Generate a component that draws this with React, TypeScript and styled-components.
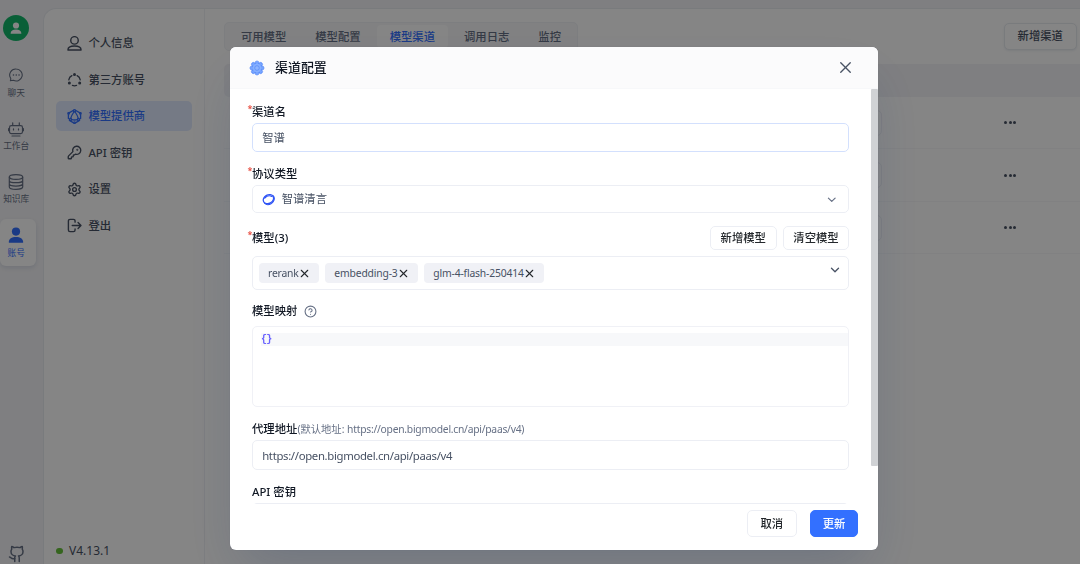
import React from "react";
import styled, { createGlobalStyle } from "styled-components";
import { Github, KeyRound, Settings, X, ChevronDown, CircleHelp } from "lucide-react";

const GlobalStyle = createGlobalStyle`
  * { box-sizing: border-box; }
  body {
    margin: 0;
    overflow: hidden;
    font-family: "Noto Sans", "Noto Sans CJK SC", sans-serif;
    font-size: 11.35px;
    line-height: 16px;
    color: #111824;
  }
  button, input { font: inherit; }
`;

const Page = styled.div`
  display: flex;
  height: 564px;
  width: 1080px;
  background: #f4f4f7;
`;

const Rail = styled.nav`
  width: 42.5px;
  flex: none;
  display: flex;
  flex-direction: column;
  padding: 15.3px 0 0;
`;

const Avatar = styled.div`
  width: 26px;
  height: 26px;
  margin-left: 3.4px;
  border-radius: 50%;
  background: #12b76a;
  color: #fff;
  display: flex;
  align-items: center;
  justify-content: center;
`;

const RailList = styled.div`
  display: flex;
  flex-direction: column;
  gap: 6.4px;
  margin-top: 17.9px;
`;

const RailItem = styled.div<{ $active?: boolean }>`
  width: 36.4px;
  height: 47px;
  padding: 8px 4px 0 0;
  display: flex;
  flex-direction: column;
  align-items: center;
  gap: 1.4px;
  font-size: 8.7px;
  white-space: nowrap;
  border-radius: 6px;
  color: ${(p) => (p.$active ? "#3370ff" : "#667085")};
  background: ${(p) => (p.$active ? "#fff" : "transparent")};
  box-shadow: ${(p) => (p.$active ? "0 2px 5px rgba(19,51,107,.12)" : "none")};
`;

const RailFoot = styled.div`
  margin: auto 0 0 7.8px;
  height: 18.6px;
  color: #667085;
`;

const Shell = styled.div`
  flex: 1;
  margin-top: 7.5px;
  display: flex;
  background: #fff;
  border: 1px solid #e8ebf0;
  border-right: 0;
  border-bottom: 0;
  border-radius: 13px 0 0 0;
`;

const Side = styled.aside`
  width: 161.3px;
  flex: none;
  display: flex;
  flex-direction: column;
  padding: 19.6px 12.3px 5.2px 12.5px;
  border-right: 1px solid #f0f1f6;
`;

const SideList = styled.div`
  display: flex;
  flex-direction: column;
  gap: 6.5px;
`;

const SideItem = styled.div<{ $active?: boolean }>`
  height: 30px;
  display: flex;
  align-items: center;
  gap: 6.8px;
  padding-left: 10.6px;
  border-radius: 5px;
  font-weight: 500;
  color: ${(p) => (p.$active ? "#3370ff" : "#485264")};
  background: ${(p) => (p.$active ? "#e1eaff" : "transparent")};
`;

const Version = styled.div`
  margin-top: auto;
  display: flex;
  align-items: center;
  gap: 6.5px;
  font-size: 12px;
  color: #485264;
  &::before {
    content: "";
    width: 6.5px;
    height: 6.5px;
    border-radius: 50%;
    background: #67c13b;
  }
`;

const Main = styled.main`
  flex: 1;
  padding: 13px 0 0 19.5px;
`;

const Bar = styled.div`
  display: flex;
  justify-content: space-between;
  align-items: center;
  padding-right: 3.5px;
`;

const Tabs = styled.div`
  display: flex;
  gap: 3.7px;
  height: 29px;
  padding: 2px 3px;
  border-radius: 5px;
  border: 1px solid #f0f1f6;
  background: #f7f8fa;
`;

const Tab = styled.div<{ $active?: boolean }>`
  display: flex;
  align-items: center;
  padding: 1px 12.65px 0;
  border-radius: 4px;
  font-weight: 500;
  color: ${(p) => (p.$active ? "#3370ff" : "#667085")};
  background: ${(p) => (p.$active ? "#fff" : "transparent")};
`;

const Button = styled.button<{ $w: number; $h?: number; $primary?: boolean }>`
  width: ${(p) => p.$w}px;
  height: ${(p) => p.$h ?? 27}px;
  padding: 0;
  border-radius: 5px;
  font-weight: 500;
  white-space: nowrap;
  border: 1px solid ${(p) => (p.$primary ? "#3370ff" : "#eceef4")};
  background: ${(p) => (p.$primary ? "#3370ff" : "#fff")};
  color: ${(p) => (p.$primary ? "#fff" : "#24282c")};
`;

const ToolbarButton = styled(Button)`
  border-color: #e8ebf0;
  color: #485264;
  box-shadow: 0 1px 2px rgba(19, 51, 107, 0.08);
`;

const Table = styled.div`
  margin-top: 13px;
`;

const TableHead = styled.div`
  height: 33.4px;
  border-radius: 5px 0 0 5px;
  background: #f4f4f7;
`;

const TableRow = styled.div`
  height: 52.5px;
  display: flex;
  align-items: center;
  border-bottom: 1px solid #f7f8fa;
`;

const Priority = styled.div`
  width: 60px;
  height: 26px;
  margin-left: 598px;
  border: 1px solid #f0f1f6;
  border-radius: 5px;
`;

const Dots = styled.div`
  display: flex;
  gap: 1.6px;
  margin: 0.6px 0 0 122px;
  i {
    width: 3px;
    height: 3px;
    border-radius: 50%;
    background: #485264;
  }
`;

const Overlay = styled.div`
  position: fixed;
  inset: 0;
  display: flex;
  align-items: flex-start;
  padding: 46.5px 0 0 229.5px;
  background: rgba(0, 0, 0, 0.48);
`;

const Modal = styled.section`
  width: 648.3px;
  height: 503.3px;
  display: flex;
  flex-direction: column;
  overflow: hidden;
  border-radius: 6px;
  background: #fff;
  box-shadow: 0 26px 52px -10px rgba(19, 51, 107, 0.2), 0 0 1px rgba(19, 51, 107, 0.2);
`;

const ModalHead = styled.header`
  height: 42.8px;
  flex: none;
  display: flex;
  align-items: center;
  padding: 0.8px 23.3px 0 19.5px;
  background: #fbfbfc;
  border-bottom: 1px solid #f7f8fa;
`;

const Title = styled.h1`
  flex: 1;
  margin: -1px 0 0 10px;
  font-size: 12.95px;
  font-weight: 500;
  line-height: 20px;
`;

const ScrollArea = styled.div`
  flex: 1;
  min-height: 0;
  display: flex;
  justify-content: space-between;
`;

const Thumb = styled.div`
  width: 7px;
  height: 377px;
  border-radius: 1px;
  background: #d0d2d5;
`;

const FormClip = styled.div`
  width: 603px;
  margin-left: 16.5px;
  padding-left: 6px;
  overflow: hidden;
`;

const Label = styled.div<{ $top: number; $h?: number }>`
  margin-top: ${(p) => p.$top}px;
  height: ${(p) => p.$h ?? 16}px;
  display: flex;
  align-items: center;
  font-weight: 500;
`;

const Star = styled.span`
  width: 4.5px;
  height: 18px;
  margin-left: -4.5px;
  color: #e5392c;
  font-size: 9px;
  line-height: 12px;
`;

const Hint = styled.span`
  font-size: 10.3px;
  font-weight: 400;
  color: #667085;
`;

const Url = styled.span<{ $tight: number }>`
  letter-spacing: -${(p) => p.$tight}px;
`;

const HelpMark = styled.span`
  display: flex;
  margin-left: 7px;
  color: #667085;
`;

const Actions = styled.div`
  display: flex;
  gap: 6.5px;
  margin-left: auto;
`;

const Field = styled.div<{ $top: number; $h: number; $focus?: boolean }>`
  margin-top: ${(p) => p.$top}px;
  height: ${(p) => p.$h}px;
  display: flex;
  align-items: center;
  padding: 0 10px 0 9.2px;
  border: 1px solid ${(p) => (p.$focus ? "#d3e0fd" : "#eceef4")};
  border-radius: 5px;
  color: #485264;
`;

const UrlField = styled(Field)`
  padding-top: 1.6px;
`;

const SelectText = styled.span`
  flex: 1;
  margin-left: 6.5px;
`;

const TagField = styled(Field)`
  gap: 6.5px;
  padding: 0 6px;
`;

const Tag = styled.span`
  height: 19.5px;
  display: flex;
  align-items: center;
  gap: 0;
  padding: 0.5px 7.2px 0 9px;
  border-radius: 4px;
  background: #f0f1f6;
  color: #485264;
  font-size: 10.35px;
  letter-spacing: -0.17px;
  svg { color: #24282c; margin-left: -0.5px; margin-right: 0.5px; }
`;

const TagArrow = styled.span`
  display: flex;
  margin: 0 0 6px auto;
  color: #485264;
`;

const Editor = styled.div`
  height: 81.5px;
  margin-top: 6.4px;
  padding: 6px 0 0 8px;
  border: 1px solid #f0f1f6;
  border-radius: 5px;
`;

const CodeLine = styled.div`
  height: 13px;
  line-height: 14px;
  background: #f7f8fa;
  color: #6a63ff;
  font-family: "Liberation Mono", monospace;
  font-size: 10px;
  font-weight: 700;
  letter-spacing: -0.8px;
`;

const Foot = styled.footer`
  height: 46px;
  flex: none;
  display: flex;
  justify-content: flex-end;
  gap: 13px;
  padding: 6.3px 19.5px 0 0;
`;

function UserSolid({ size }: { size: number }) {
  return (
    <svg width={size} height={size} viewBox="0 0 16 16" fill="currentColor">
      <circle cx="8" cy="4.6" r="4.1" />
      <path d="M.8 15.2c0-3.4 3-5.2 7.2-5.2s7.2 1.8 7.2 5.2c0 .4-.2.6-.6.6H1.4c-.4 0-.6-.2-.6-.6Z" />
    </svg>
  );
}

function Stroke({ size, children, w = 1.3 }: { size: number; children: React.ReactNode; w?: number }) {
  return (
    <svg width={size} height={size} viewBox="0 0 16 16" fill="none" stroke="currentColor" strokeWidth={w} strokeLinecap="round" strokeLinejoin="round">
      {children}
    </svg>
  );
}

const ChatIcon = () => (
  <Stroke size={16} w={1.1}>
    <path d="M8.2 2a6 6 0 1 1-2.8 11.3c-.9.2-1.9.4-3 .4.3-.8.4-1.6.3-2.4A6 6 0 0 1 8.2 2Z" />
    <path d="M5.4 8h.1M8.2 8h.1M11 8h.1" strokeWidth="1.5" />
  </Stroke>
);

const RobotIcon = () => (
  <Stroke size={16} w={1.2}>
    <rect x="1.5" y="4.6" width="13" height="8" rx="1.8" />
    <path d="M4.7 4.2V1.8M11.3 4.2V1.8M5.5 7.9v1M10.5 7.9v1M4 15h8M.6 7.7v2M15.4 7.7v2" />
  </Stroke>
);

const DatabaseIcon = () => (
  <Stroke size={16} w={1.2}>
    <ellipse cx="8" cy="3" rx="6.7" ry="2.4" />
    <path d="M1.3 3v10c0 1.3 3 2.4 6.7 2.4s6.7-1.1 6.7-2.4V3M1.3 6.4c0 1.3 3 2.3 6.7 2.3s6.7-1 6.7-2.3M1.3 9.8c0 1.3 3 2.3 6.7 2.3s6.7-1 6.7-2.3" />
  </Stroke>
);

const PersonIcon = () => (
  <Stroke size={15} w={1.5}>
    <circle cx="8" cy="4.7" r="4" />
    <path d="M1 14.9c0-2.6 2.9-4.2 7-4.2s7 1.6 7 4.2Z" />
  </Stroke>
);

const CircleNodesIcon = () => (
  <Stroke size={15} w={1.4}>
    <path d="M5.2 3.9a6 6 0 0 0-3.3 4.4M10.8 3.9a6 6 0 0 1 3.3 4.4M5.8 14.3a6 6 0 0 0 4.4 0" />
    <g fill="currentColor" stroke="none">
      <circle cx="8" cy="2.7" r="1.6" />
      <circle cx="2.5" cy="11.7" r="1.6" />
      <circle cx="13.5" cy="11.7" r="1.6" />
    </g>
  </Stroke>
);

const ProviderIcon = () => (
  <Stroke size={15} w={1.4}>
    <path d="M6.6 1.6 2.2 4.1M9.4 1.6l4.4 2.5M1.5 6v4M14.5 6v4M2.6 12.2l4 2.3M13.4 12.2l-4 2.3M7.3 3.2C5.6 5.7 4.4 8 4 10.1M8.7 3.2c1.7 2.5 2.9 4.8 3.3 6.9M4.9 11.3c2 .6 4.2.6 6.2 0" />
    <circle cx="8" cy="1.9" r="1.2" />
    <circle cx="1.7" cy="4.7" r=".8" />
    <circle cx="14.3" cy="4.7" r=".8" />
    <circle cx="3.7" cy="11.2" r="1.2" />
    <circle cx="12.3" cy="11.2" r="1.2" />
    <circle cx="8" cy="14.6" r=".9" />
  </Stroke>
);

const ExitIcon = () => (
  <Stroke size={15} w={1.5}>
    <path d="M8.6 4.4V3.2c0-1-.7-1.7-1.7-1.7H3.2c-1 0-1.7.7-1.7 1.7v9.6c0 1 .7 1.7 1.7 1.7h3.7c1 0 1.7-.7 1.7-1.7v-1.2M5.6 8h9.2M11.8 4.9 14.9 8l-3.1 3.1" />
  </Stroke>
);

const FlowerIcon = () => (
  <svg width="16" height="16" viewBox="0 0 16 16">
    <g fill="#76a4ff" stroke="#4d83f7" strokeWidth=".6">
      {[0, 45, 90, 135, 180, 225, 270, 315].map((a) => (
        <ellipse key={a} cx="8" cy="3.4" rx="2" ry="2.5" transform={`rotate(${a} 8 8)`} />
      ))}
      <circle cx="8" cy="8" r="4.2" stroke="none" fill="#86b0ff" />
      <circle cx="8" cy="8" r="2.3" fill="#8db4ff" />
    </g>
  </svg>
);

const ZhipuIcon = () => (
  <svg width="13" height="13" viewBox="0 0 16 16" fill="none" stroke="#2f54f5" strokeLinecap="round">
    <ellipse cx="7.9" cy="7.6" rx="6.7" ry="5.2" transform="rotate(-28 7.9 7.6)" strokeWidth="1.6" />
    <path d="M14 3.6c2.2 2.8 1 7.2-2.4 9.4-3 1.8-6.6 1.6-8.4-.4M3.4 6.4C5.6 3.8 9.4 2.8 12 4.2" strokeWidth="1.4" />
  </svg>
);

const railItems = [
  { label: "聊天", icon: <ChatIcon /> },
  { label: "工作台", icon: <RobotIcon /> },
  { label: "知识库", icon: <DatabaseIcon /> },
  { label: "账号", icon: <UserSolid size={16} />, active: true },
];

const sideItems = [
  { label: "个人信息", icon: <PersonIcon /> },
  { label: "第三方账号", icon: <CircleNodesIcon /> },
  { label: "模型提供商", icon: <ProviderIcon />, active: true },
  { label: "API 密钥", icon: <KeyRound size={15} strokeWidth={2.2} /> },
  { label: "设置", icon: <Settings size={15} strokeWidth={2.2} /> },
  { label: "登出", icon: <ExitIcon /> },
];

const tabs = ["可用模型", "模型配置", "模型渠道", "调用日志", "监控"];
const models = ["rerank", "embedding-3", "glm-4-flash-250414"];
const proxyUrl = "https://open.bigmodel.cn/api/paas/v4";

export default function App() {
  return (
    <>
      <GlobalStyle />
      <Page>
        <Rail>
          <Avatar><UserSolid size={12} /></Avatar>
          <RailList>
            {railItems.map((r) => (
              <RailItem key={r.label} $active={r.active}>{r.icon}{r.label}</RailItem>
            ))}
          </RailList>
          <RailFoot><Github size={18} strokeWidth={2} /></RailFoot>
        </Rail>
        <Shell>
          <Side>
            <SideList>
              {sideItems.map((s) => (
                <SideItem key={s.label} $active={s.active}>{s.icon}{s.label}</SideItem>
              ))}
            </SideList>
            <Version>V4.13.1</Version>
          </Side>
          <Main>
            <Bar>
              <Tabs>
                {tabs.map((t) => <Tab key={t} $active={t === "模型渠道"}>{t}</Tab>)}
              </Tabs>
              <ToolbarButton $w={72.5}>新增渠道</ToolbarButton>
            </Bar>
            <Table>
              <TableHead />
              {[0, 1, 2].map((n) => (
                <TableRow key={n}>
                  <Priority />
                  <Dots><i /><i /><i /></Dots>
                </TableRow>
              ))}
            </Table>
          </Main>
        </Shell>
      </Page>
      <Overlay>
        <Modal>
          <ModalHead>
            <FlowerIcon />
            <Title>渠道配置</Title>
            <X size={19} strokeWidth={1.7} color="#485264" />
          </ModalHead>
          <ScrollArea>
            <FormClip>
              <Label $top={14.8}><Star>*</Star>渠道名</Label>
              <Field $top={2.9} $h={29.5} $focus>智谱</Field>
              <Label $top={14}><Star>*</Star>协议类型</Label>
              <Field $top={2.8} $h={28}>
                <ZhipuIcon />
                <SelectText>智谱清言</SelectText>
                <ChevronDown size={13.5} strokeWidth={2.1} color="#667085" />
              </Field>
              <Label $top={13.1} $h={24}>
                <Star>*</Star>模型(3)
                <Actions>
                  <Button $w={66.5} $h={24}>新增模型</Button>
                  <Button $w={66} $h={24}>清空模型</Button>
                </Actions>
              </Label>
              <TagField $top={6} $h={33.2}>
                {models.map((m) => (
                  <Tag key={m}>{m}<X size={13} strokeWidth={2} /></Tag>
                ))}
                <TagArrow><ChevronDown size={14} strokeWidth={2.2} /></TagArrow>
              </TagField>
              <Label $top={13.9}>
                模型映射<HelpMark><CircleHelp size={13} strokeWidth={2} /></HelpMark>
              </Label>
              <Editor><CodeLine>{"{}"}</CodeLine></Editor>
              <Label $top={13.8}>
                代理地址<Hint>(默认地址: <Url $tight={0.25}>{proxyUrl})</Url></Hint>
              </Label>
              <UrlField $top={3.2} $h={29.5}><Url $tight={0.33}>{proxyUrl}</Url></UrlField>
              <Label $top={13.8}>API 密钥</Label>
              <Field $top={3.2} $h={29.5} />
            </FormClip>
            <Thumb />
          </ScrollArea>
          <Foot>
            <Button $w={50}>取消</Button>
            <Button $w={48.5} $primary>更新</Button>
          </Foot>
        </Modal>
      </Overlay>
    </>
  );
}
